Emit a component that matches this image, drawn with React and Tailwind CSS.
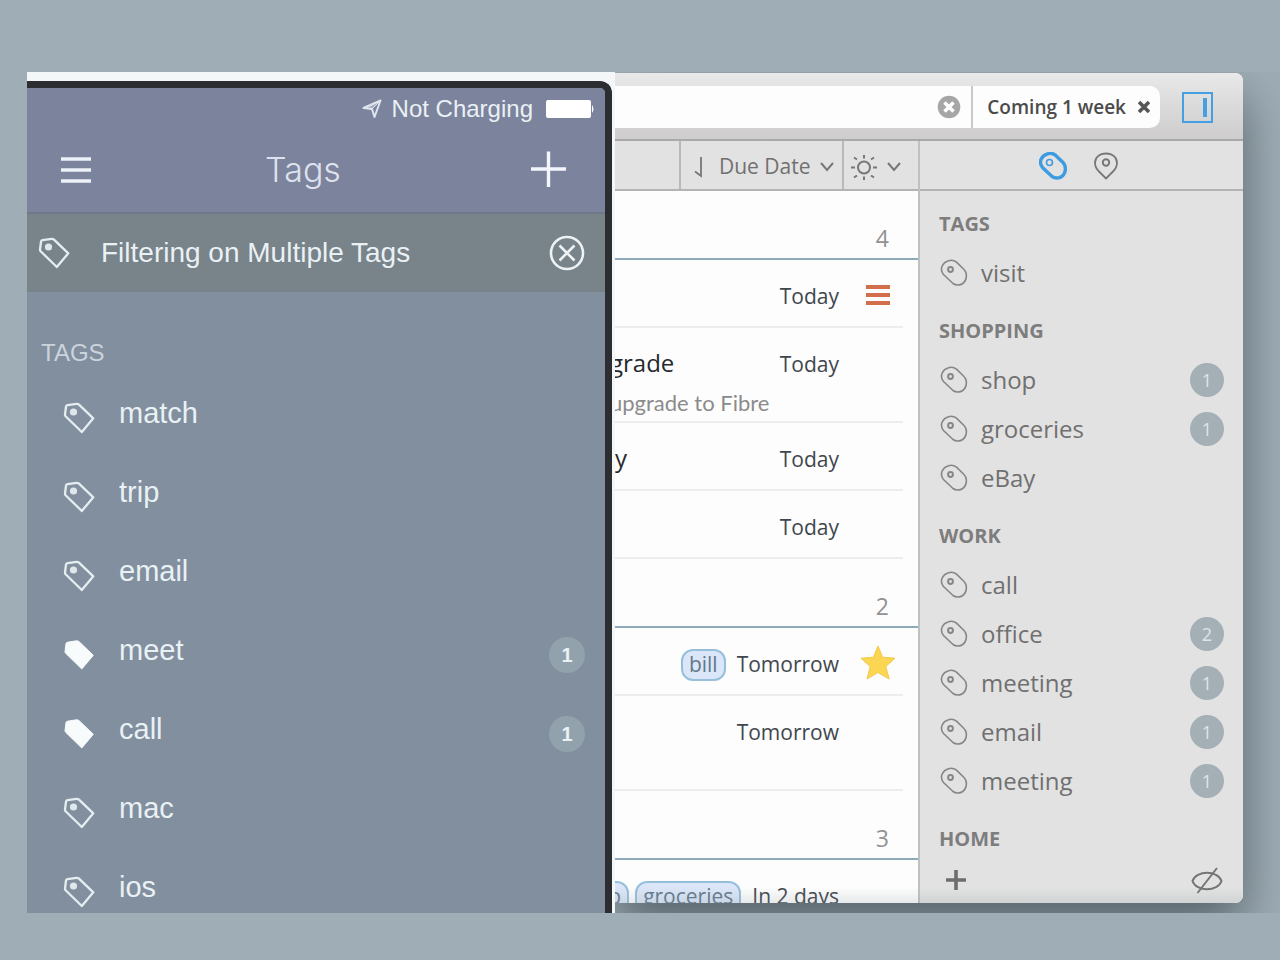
import React from "react";

const phoneTags = [
  { name: "match" },
  { name: "trip" },
  { name: "email" },
  { name: "meet", count: 1, active: true },
  { name: "call", count: 1, active: true },
  { name: "mac" },
  { name: "ios" },
];

const taskGroups = [
  {
    count: 4,
    tasks: [
      { due: "Today", mark: "priority" },
      { title: "grade", note: "upgrade to Fibre", due: "Today", tall: true },
      { title: "y", due: "Today" },
      { due: "Today" },
    ],
  },
  {
    count: 2,
    tasks: [
      { tags: ["bill"], due: "Tomorrow", mark: "star" },
      { due: "Tomorrow", tall: true },
    ],
  },
  { count: 3, tasks: [{ tags: ["shop", "groceries"], due: "In 2 days" }] },
];

const tagGroups = [
  { title: "TAGS", tags: [{ name: "visit" }] },
  {
    title: "SHOPPING",
    tags: [{ name: "shop", count: 1 }, { name: "groceries", count: 1 }, { name: "eBay" }],
  },
  {
    title: "WORK",
    tags: [
      { name: "call" },
      { name: "office", count: 2 },
      { name: "meeting", count: 1 },
      { name: "email", count: 1 },
      { name: "meeting", count: 1 },
    ],
  },
  { title: "HOME", tags: [] },
];

function PhoneTagIcon({ filled }) {
  return (
    <svg className="size-8 shrink-0" viewBox="0 0 32 32" fill="none" aria-hidden="true">
      <path
        d="M4.5 3.200 L13.500 1.800 Q15 1.700 16 2.600 L30.300 16.300 L18.800 30 L2.600 14.200 Q1.900 13.500 2 12.500 L3 4.600 Q3.200 3.400 4.500 3.200Z"
        fill={filled ? "#f8fbfb" : "none"}
        stroke={filled ? "#f8fbfb" : "#e4edf0"}
        strokeWidth={filled ? 1 : 2.3}
        strokeLinejoin="round"
      />
      {!filled && <circle cx="10.5" cy="10" r="3.6" fill="#dfe7ec" />}
    </svg>
  );
}

function TagIcon({ active }) {
  return (
    <svg className="size-7 shrink-0" viewBox="0 0 28 28" fill="none" stroke={active ? "#3d9be0" : "#868686"} aria-hidden="true">
      <path
        d="M8.500 1.800 C11 .9 14 1.300 16.500 3.200 L24 10.500 C27 13.500 27 18.500 25 22 C22.500 26.500 16.500 27 13 24.500 L3.500 15.500 C1.200 12.500 1 9.500 2.200 7 C3.500 4.200 5.800 2.600 8.500 1.800Z"
        strokeWidth={active ? 3.4 : 1.6}
      />
      <circle cx="10.5" cy="10.5" r={active ? 3 : 2.4} strokeWidth={active ? 1.6 : 2} />
    </svg>
  );
}

function Chevron() {
  return (
    <svg className="h-3 w-4 shrink-0" viewBox="0 0 16 12" fill="none" stroke="#777" strokeWidth="2" aria-hidden="true">
      <path d="M2 2 L8 9 L14 2" />
    </svg>
  );
}

function Phone() {
  return (
    <section className="flex min-w-0 flex-col overflow-hidden bg-[#f3f7f8] pt-[9px] pr-[3px] font-['Liberation_Sans',Arial,sans-serif] text-[#eaf1f5]">
      <div className="flex min-h-0 flex-1 flex-col overflow-hidden rounded-tr-xl border-t-[7px] border-r-[7px] border-[#2b2d30] bg-[#818f9f]">
        <header className="shrink-0 border-b-2 border-[#6f7889] bg-[#7c839d]">
          <div className="flex h-[42px] items-center justify-end pr-[10px] text-[24px]">
            <svg className="mr-[10px] size-5" viewBox="0 0 20 20" fill="none" stroke="#dfe5ee" strokeWidth="2" strokeLinejoin="round" aria-hidden="true">
              <path d="M18.500 1.500 L12.500 18 L10 10 L1.500 9 Z" />
              <path d="M10 10 L18.500 1.500 L1.500 9Z" fill="#dfe5ee" fillOpacity=".45" strokeWidth="1" />
            </svg>
            <span>Not Charging</span>
            <svg className="ml-3 h-5 w-[50px]" viewBox="0 0 50 20" fill="#fff" aria-hidden="true">
              <rect x="1" y="1" width="45" height="18" rx="2" />
              <path d="M47 6 Q50 10 47 14Z" />
            </svg>
          </div>
          <div className="flex h-[82px] items-center justify-between pr-9 pb-[3px] pl-8">
            <button type="button" aria-label="Menu">
              <svg className="h-8 w-[34px]" viewBox="0 0 34 32" stroke="#edf1f8" strokeWidth="3.6" aria-hidden="true">
                <path d="M2 5H32M2 16H32M2 27H32" />
              </svg>
            </button>
            <h1 className="pr-4 font-['Inter',sans-serif] text-[34px] font-light text-[#dfe2ee]">Tags</h1>
            <button type="button" aria-label="Add tag">
              <svg className="size-10" viewBox="0 0 40 40" stroke="#f3f6fb" strokeWidth="3.400" aria-hidden="true">
                <path d="M2 19H37M19.500 1.500V37" />
              </svg>
            </button>
          </div>
        </header>
        <div className="flex h-[78px] shrink-0 items-center bg-[#78838a] pr-5 pl-[11px] text-[28px]">
          <PhoneTagIcon />
          <span className="ml-[31px] flex-1 whitespace-nowrap">Filtering on Multiple Tags</span>
          <button type="button" aria-label="Clear filter">
            <svg className="size-9" viewBox="0 0 36 36" fill="none" stroke="#edf3f5" strokeWidth="2.6" aria-hidden="true">
              <circle cx="18" cy="18" r="16" />
              <path d="M10.500 10.500L25.500 25.500M25.500 10.500L10.500 25.500" />
            </svg>
          </button>
        </div>
        <h2 className="mt-[46px] ml-[14px] text-[24px] leading-[30px] text-[#cbd3dc]">TAGS</h2>
        <ul className="mt-[10px]">
          {phoneTags.map((tag) => (
            <li key={tag.name} className="flex h-[79px] items-center pr-5 pl-9 text-[29px]">
              <PhoneTagIcon filled={tag.active} />
              <span className="ml-6 flex-1 pb-2">{tag.name}</span>
              {tag.count && (
                <span className="flex size-9 items-center justify-center rounded-full bg-[#92a2ad] text-[20px] font-bold">
                  {tag.count}
                </span>
              )}
            </li>
          ))}
        </ul>
      </div>
    </section>
  );
}

function Toolbar() {
  return (
    <div className="flex h-[68px] shrink-0 items-center border-b-2 border-[#a9a9ab] bg-linear-to-b from-[#e9e9e9] to-[#cecccd] pt-[2px]">
      <div className="flex h-[42px] min-w-0 flex-1 items-center overflow-hidden rounded-r-[10px] bg-[#fdfdfd]">
        <input type="text" aria-label="Search tasks" className="h-full min-w-0 flex-1 px-3 text-[20px] outline-none" />
        <button type="button" aria-label="Clear search" className="mr-[10px]">
          <svg className="size-6" viewBox="0 0 24 24" aria-hidden="true">
            <circle cx="12" cy="12" r="11.300" fill="#a6a6a6" />
            <path d="M7.500 7.500L16.500 16.500M16.500 7.500L7.500 16.500" stroke="#fff" strokeWidth="3.6" />
          </svg>
        </button>
        <div className="flex h-full items-center gap-3 border-l-2 border-[#c9c9c9] pr-[10px] pl-[14px] text-[19px] font-semibold text-[#4b4b4b]">
          <span className="whitespace-nowrap">Coming 1 week</span>
          <button type="button" aria-label="Remove Coming 1 week">
            <svg className="size-3" viewBox="0 0 12 12" stroke="#555" strokeWidth="3.6" aria-hidden="true">
              <path d="M1 1L11 11M11 1L1 11" />
            </svg>
          </button>
        </div>
      </div>
      <button type="button" aria-label="Toggle sidebar" className="mr-[30px] ml-[22px]">
        <svg className="size-[31px]" viewBox="0 0 31 31" fill="none" stroke="#469fe0" aria-hidden="true">
          <rect x="1" y="1" width="29" height="29" strokeWidth="2" />
          <path d="M23 6V25" strokeWidth="4" />
        </svg>
      </button>
    </div>
  );
}

function Mark({ kind }) {
  if (kind === "priority") {
    return (
      <svg className="h-5 w-6" viewBox="0 0 24 20" stroke="#d26e4b" strokeWidth="4" role="img" aria-label="High priority">
        <path d="M0 2H24M0 10H24M0 18H24" />
      </svg>
    );
  }
  if (kind === "star") {
    return (
      <svg className="size-9" viewBox="0 0 36 36" fill="#fad652" stroke="#f3c94a" strokeLinejoin="round" role="img" aria-label="Starred">
        <path d="M18 1 L22.600 12.200 L35 13.200 L25.800 21.600 L29.200 34 L18 27.500 L7 34 L10.200 21.600 L1 13.200 L13.400 12.200 Z" />
      </svg>
    );
  }
  return null;
}

function TaskTable() {
  const th = "h-[50px] border-b-2 border-[#b4b4b6] bg-[#e2e2e2] p-0 font-normal";
  return (
    <div className="min-w-0 flex-1 overflow-hidden">
      <table className="w-full table-fixed border-separate border-spacing-0">
        <colgroup>
          <col />
          <col className="w-[163px]" />
          <col className="w-[76px]" />
        </colgroup>
        <thead>
          <tr>
            <th scope="col" aria-label="Task" className={th} />
            <th scope="col" className={th}>
              <button type="button" className="flex h-full w-full items-center border-l-2 border-[#b9b9bb] pt-[3px] pr-[7px] pl-3 text-[21px] font-medium whitespace-nowrap text-[#707070]">
                <svg className="h-6 w-3 shrink-0" viewBox="0 0 12 24" fill="none" stroke="#777" strokeWidth="1.8" aria-hidden="true">
                  <path d="M8 2V21L2 16.500" />
                </svg>
                <span className="mr-auto ml-[14px]">Due Date</span>
                <Chevron />
              </button>
            </th>
            <th scope="col" className={th}>
              <button type="button" aria-label="Priority" className="flex h-full w-full items-center justify-between border-l-2 border-[#b9b9bb] pt-[3px] pr-4 pl-[7px]">
                <svg className="size-[26px]" viewBox="0 0 26 26" fill="none" stroke="#777" strokeWidth="2" aria-hidden="true">
                  <circle cx="13" cy="13.500" r="6" />
                  <path d="M13 1V4.500M13 22.500V26M0 13.500H4M22 13.500H26M3 3.500L6 5.500M20 5.500L23 3.500M3 23.500L6 21.500M20 21.500L23 23.500" />
                </svg>
                <Chevron />
              </button>
            </th>
          </tr>
        </thead>
        {taskGroups.map((group) => (
          <tbody key={group.count}>
            <tr>
              <th scope="rowgroup" colSpan={3} className="h-[69px] border-b-2 border-[#8faabb] p-0 pt-[26px] pr-[29px] text-right text-[23px] leading-[38px] font-normal text-[#929292]">
                {group.count}
              </th>
            </tr>
            {group.tasks.map((task, i) => {
              const cell = task.tall
                ? "flex h-[95px] border-b-2 border-[#ededed] pt-[17px]"
                : "flex h-[68px] border-b-2 border-[#ededed] pt-[17px]";
              return (
                <tr key={i}>
                  <td className="p-0">
                    <div className={`${cell} flex-col whitespace-nowrap ${task.note ? "-ml-[5px]" : ""}`}>
                      {task.title && (
                        <span className="text-[24px] leading-[36px] text-[#26292d]">{task.title}</span>
                      )}
                      {task.note && (
                        <span className="font-['Lato',sans-serif] text-[22px] leading-[44px] text-[#8b8b8b]">{task.note}</span>
                      )}
                    </div>
                  </td>
                  <td className="p-0">
                    <div className={`${cell} justify-end pr-[3px] text-[21px] leading-[38px] whitespace-nowrap text-[#3f474d]`}>
                      {task.tags &&
                        task.tags.map((tag) => (
                          <span key={tag} className="mt-1 mr-[6px] h-8 rounded-xl border-2 border-[#96bfdb] bg-[#dbe6f8] px-[6px] leading-[26px] text-[#62798b] last-of-type:mr-[5px]">
                            {tag}
                          </span>
                        ))}
                      <time className="ml-[6px]">{task.due}</time>
                    </div>
                  </td>
                  <td className="p-0">
                    <div className={`${cell} mr-[15px] items-start pl-[18px]`}>
                      <div className="flex size-9 items-center justify-center">
                        <Mark kind={task.mark} />
                      </div>
                    </div>
                  </td>
                </tr>
              );
            })}
          </tbody>
        ))}
      </table>
    </div>
  );
}

function TagSidebar() {
  return (
    <aside className="flex w-[325px] shrink-0 flex-col border-l-2 border-[#bfc0c2] bg-[#e2e2e2] text-[#707070]">
      <div className="flex h-[50px] shrink-0 items-center justify-center gap-[27px] border-b-2 border-[#b4b4b6] pt-[2px] pr-[7px]">
        <button type="button" aria-label="Tags">
          <TagIcon active />
        </button>
        <button type="button" aria-label="Locations">
          <svg className="h-7 w-6" viewBox="0 0 24 28" fill="none" stroke="#777" strokeWidth="1.8" strokeLinejoin="round" aria-hidden="true">
            <path d="M12 1.500 C5.500 1.500 1 5.500 1 11 C1 14.500 2.500 17 5 19.500 L12 26.500 L19 19.500 C21.500 17 23 14.500 23 11 C23 5.500 18.500 1.500 12 1.500Z" />
            <circle cx="12" cy="10.500" r="3.200" strokeWidth="2" />
          </svg>
        </button>
      </div>
      <div className="min-h-0 flex-1 overflow-hidden pr-[19px] pl-[18px]">
        {tagGroups.map((group) => (
          <section key={group.title}>
            <h3 className="flex h-[58px] items-center pt-[7px] pl-px text-[20px] font-bold text-[#7d7d7d]">{group.title}</h3>
            <ul>
              {group.tags.map((tag, i) => (
                <li key={i} className="flex h-[49px] items-center pb-px pl-[2px] text-[24px]">
                  <TagIcon />
                  <span className="ml-[13px] flex-1">{tag.name}</span>
                  {tag.count && (
                    <span className="flex size-[34px] items-center justify-center rounded-full bg-[#a4b0b5] text-[18px] text-[#dce6ea]">
                      {tag.count}
                    </span>
                  )}
                </li>
              ))}
            </ul>
          </section>
        ))}
      </div>
      <div className="flex h-[46px] shrink-0 items-center justify-between pr-5 pl-[26px]">
        <button type="button" aria-label="New tag">
          <svg className="size-5" viewBox="0 0 20 20" stroke="#6d6d6d" strokeWidth="3.600" aria-hidden="true">
            <path d="M0 10H20M10 0V20" />
          </svg>
        </button>
        <button type="button" aria-label="Hide unused tags">
          <svg className="h-7 w-8" viewBox="0 0 32 28" fill="none" stroke="#757575" strokeWidth="2" aria-hidden="true">
            <path d="M1.500 15 C5 4 27 4 30.500 15 C27 26 5 26 1.500 15Z" />
            <path d="M6.500 27L26 2" />
          </svg>
        </button>
      </div>
    </aside>
  );
}

function DesktopWindow() {
  return (
    <section className="min-w-0 overflow-hidden pt-px pr-[37px] pb-[10px] font-['Open_Sans','Noto_Sans',sans-serif]">
      <div className="h-full rounded-r-lg shadow-[0_24px_50px_rgba(40,52,56,0.6)]">
        <div className="relative flex h-full flex-col overflow-hidden rounded-r-lg bg-[#fdfdfd]">
          <Toolbar />
          <div className="flex min-h-0 flex-1">
            <TaskTable />
            <TagSidebar />
          </div>
          <div className="pointer-events-none absolute inset-x-0 bottom-0 h-4 bg-linear-to-b from-transparent to-[#8b979c]/20" />
        </div>
      </div>
    </section>
  );
}

export default function App() {
  return (
    <main className="grid h-screen grid-cols-[588fr_665fr] grid-rows-[minmax(0,1fr)] overflow-hidden bg-[#9fadb6] pt-[72px] pb-[47px] pl-[27px]">
      <Phone />
      <DesktopWindow />
    </main>
  );
}
